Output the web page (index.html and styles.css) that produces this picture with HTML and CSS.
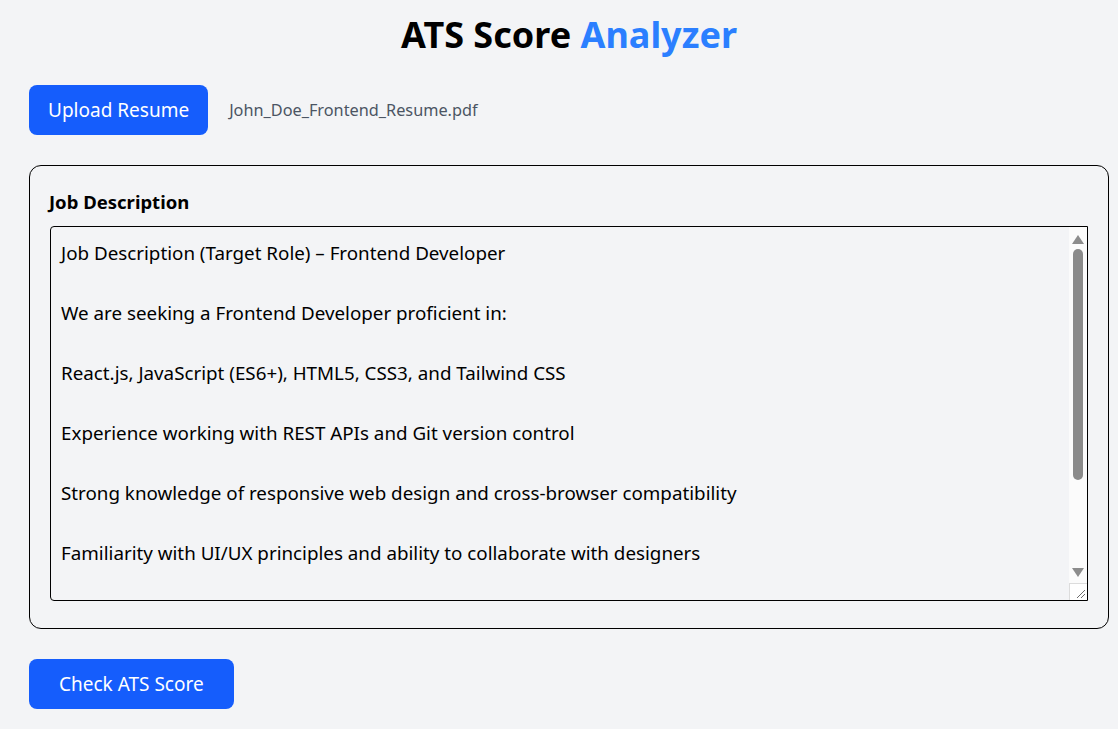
FILE: index.html
```html
<!DOCTYPE html>
<html lang="en">
<head>
<meta charset="utf-8">
<title>ATS Score Analyzer</title>
<link rel="stylesheet" href="styles.css">
</head>
<body>
<main class="page">
  <h1 class="title">ATS Score <span class="title-accent">Analyzer</span></h1>

  <div class="upload-row">
    <button class="btn btn-upload" type="button">Upload Resume</button>
    <span class="file-name">John_Doe_Frontend_Resume.pdf</span>
  </div>

  <section class="card">
    <label class="card-label" for="jd">Job Description</label>
    <div class="jd-wrap">
      <textarea id="jd" class="jd-input">Job Description (Target Role) – Frontend Developer

We are seeking a Frontend Developer proficient in:

React.js, JavaScript (ES6+), HTML5, CSS3, and Tailwind CSS

Experience working with REST APIs and Git version control

Strong knowledge of responsive web design and cross-browser compatibility

Familiarity with UI/UX principles and ability to collaborate with designers

Experience with Next.js or TypeScript is a plus

Good problem-solving and communication skills</textarea>
      <div class="vscroll" aria-hidden="true">
        <div class="vscroll-btn"><span class="arrow-up"></span></div>
        <div class="vscroll-track"><div class="vscroll-thumb"></div></div>
        <div class="vscroll-btn"><span class="arrow-down"></span></div>
        <div class="vscroll-corner">
          <svg width="16" height="16" viewBox="0 0 16 16">
            <line x1="6" y1="14" x2="14" y2="6" stroke="#6b6b6b" stroke-width="1"/>
            <line x1="10" y1="14" x2="14" y2="10" stroke="#6b6b6b" stroke-width="1"/>
          </svg>
        </div>
      </div>
    </div>
  </section>

  <div class="actions">
    <button class="btn btn-check" type="button">Check ATS Score</button>
  </div>
</main>
</body>
</html>
```

FILE: styles.css
```css
* { box-sizing: border-box; }

html, body {
  margin: 0;
  background: #f3f4f6;
}

body {
  font-family: "Noto Sans", "Open Sans", sans-serif;
  color: #000;
}

.page {
  padding: 15px 9px 20px 29px;
}

.title {
  margin: 0;
  text-align: center;
  font-size: 36px;
  line-height: 40px;
  font-weight: 700;
  color: #000;
}

.title-accent {
  color: #2b7fff;
}

.upload-row {
  margin-top: 30px;
  display: flex;
  align-items: center;
  gap: 21px;
}

.btn {
  height: 50px;
  border: none;
  border-radius: 8px;
  background: #155dfc;
  color: #fff;
  font-family: inherit;
  font-size: 19px;
  cursor: pointer;
}

.btn-upload {
  padding: 0 19px;
}

.btn-check {
  padding: 0 30px;
}

.file-name {
  font-size: 16.3px;
  color: #4b5563;
}

.card {
  margin-top: 30px;
  border: 1px solid #000;
  border-radius: 12px;
  padding: 20px 20px 27px 20px;
}

.card-label {
  display: block;
  font-size: 18.5px;
  line-height: 30px;
  font-weight: 700;
  padding-top: 1px;
  margin-bottom: 9px;
  margin-left: -1px;
}

.jd-wrap {
  position: relative;
}

.jd-input {
  display: block;
  width: 100%;
  height: 375px;
  padding: 11px 28px 9px 10px;
  border: 1px solid #000;
  border-radius: 4px 0 0 4px;
  background: #f3f4f6;
  color: #000;
  font-family: inherit;
  font-size: 18.8px;
  line-height: 30px;
  resize: none;
  outline: none;
  overflow: hidden;
}

.vscroll {
  position: absolute;
  top: 1px;
  right: 1px;
  bottom: 1px;
  width: 18px;
  display: flex;
  flex-direction: column;
  background: #fbfbfb;
}

.vscroll-btn {
  height: 20px;
  display: flex;
  align-items: center;
  justify-content: center;
}

.arrow-up,
.arrow-down {
  width: 0;
  height: 0;
  border-left: 6px solid transparent;
  border-right: 6px solid transparent;
}

.arrow-up {
  border-bottom: 9px solid #8c8c8c;
  margin-top: 4px;
}

.arrow-down {
  border-top: 9px solid #8c8c8c;
  margin-bottom: 2px;
}

.vscroll-track {
  flex: 1;
  padding-top: 2px;
  display: flex;
  justify-content: center;
}

.vscroll-thumb {
  width: 10px;
  height: 231px;
  border-radius: 5px;
  background: #8a8a8a;
}

.vscroll-corner {
  height: 17px;
  border-top: 1px solid #dcdcdc;
  border-left: 1px solid #dcdcdc;
  background: #fff;
  display: flex;
  align-items: flex-end;
  justify-content: flex-end;
}

.vscroll-corner svg {
  display: block;
}

.actions {
  margin-top: 30px;
}
```
